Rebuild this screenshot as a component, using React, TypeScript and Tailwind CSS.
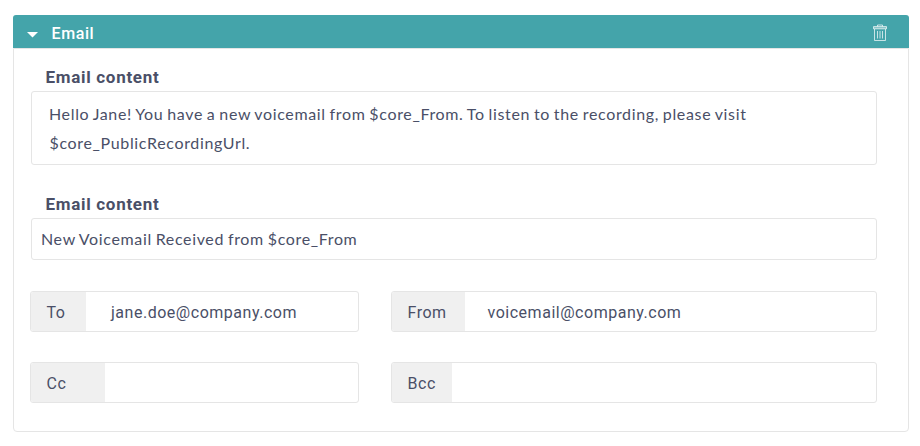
import React from "react";

function TrashIcon() {
  return (
    <svg className="mt-[3px]" width="14" height="18" viewBox="0 0 14 18" fill="none" stroke="#ffffff" strokeOpacity="0.7" aria-hidden="true">
      <path d="M4.5 2.5V1H9.5V2.5" />
      <path d="M0.5 2.6H13.5V4.8H0.5Z" fill="#ffffff" fillOpacity="0.35" />
      <path d="M1.5 5V16.5H12.5V5" />
      <path d="M4.5 7V14.5M7 7V14.5M9.5 7V14.5" />
    </svg>
  );
}

function FieldLabel({ children }: { children: React.ReactNode }) {
  return <div className="pl-[14.5px] text-[17px] font-bold leading-5 tracking-[0.7px]">{children}</div>;
}

interface AddressProps {
  label: string;
  value?: string;
  width: string;
  labelClass: string;
  valueClass?: string;
}

function AddressField({ label, value, width, labelClass, valueClass = "" }: AddressProps) {
  return (
    <div className={`flex h-[41px] overflow-hidden rounded-[3px] border border-[#e5e5e5] text-[16px] leading-[41px] tracking-[0.52px] ${width}`}>
      <div className={`bg-[#f0f0f0] pl-[15.5px] ${labelClass}`}>{label}</div>
      <div className={valueClass}>{value}</div>
    </div>
  );
}

export default function App() {
  return (
    <div className="h-[446px] w-[920px] bg-white pl-[13px] pt-[15px] font-['Roboto',sans-serif] text-[#4a4f67]">
      <section className="h-[417px] w-[896px]">
        <header className="flex h-[33px] items-center justify-between rounded-t-[3px] bg-[#44a4aa] pr-[22px] text-white">
          <div className="flex items-center">
            <svg className="ml-[14px] mt-[6px]" width="11" height="6" viewBox="0 0 11 6" aria-hidden="true">
              <path d="M0 0H11L5.5 5.5Z" fill="#ffffff" />
            </svg>
            <span className="ml-[13.5px] mt-[4px] text-[16px] font-medium leading-5 tracking-[0.6px]">Email</span>
          </div>
          <TrashIcon />
        </header>
        <div className="h-[384px] rounded-b-[4px] border border-[#e5e5e5] pl-[17px] pt-[18px]">
          <FieldLabel>Email content</FieldLabel>
          <div className="mt-[4px] h-[74px] w-[846px] rounded-[3px] border border-[#e5e5e5] pl-[17px] pt-[8px] font-['Lato',sans-serif] text-[16px] leading-[28px] tracking-[0.65px] [word-spacing:-0.9px]">
            Hello Jane! You have a new voicemail from $core_From. To listen to the recording, please visit
            <div className="pl-[0.5px] pt-px">$core_PublicRecordingUrl.</div>
          </div>
          <div className="mt-[29px]">
            <FieldLabel>Email content</FieldLabel>
          </div>
          <div className="mt-[4px] h-[42px] w-[846px] rounded-[3px] border border-[#e5e5e5] pl-[9px] font-['Lato',sans-serif] text-[16px] leading-[40px] tracking-[0.65px] [word-spacing:-0.9px]">
            New Voicemail Received from $core_From
          </div>
          <div className="-ml-px mt-[31px] flex gap-8">
            <AddressField label="To" value="jane.doe@company.com" width="w-[329px]" labelClass="w-[55px]" valueClass="pl-[25px]" />
            <AddressField label="From" value="voicemail@company.com" width="w-[486px]" labelClass="w-[73px]" valueClass="pl-[22.5px]" />
          </div>
          <div className="-ml-px mt-[30px] flex gap-8">
            <AddressField label="Cc" width="w-[329px]" labelClass="w-[74px]" />
            <AddressField label="Bcc" width="w-[486px]" labelClass="w-[60px]" />
          </div>
        </div>
      </section>
    </div>
  );
}
